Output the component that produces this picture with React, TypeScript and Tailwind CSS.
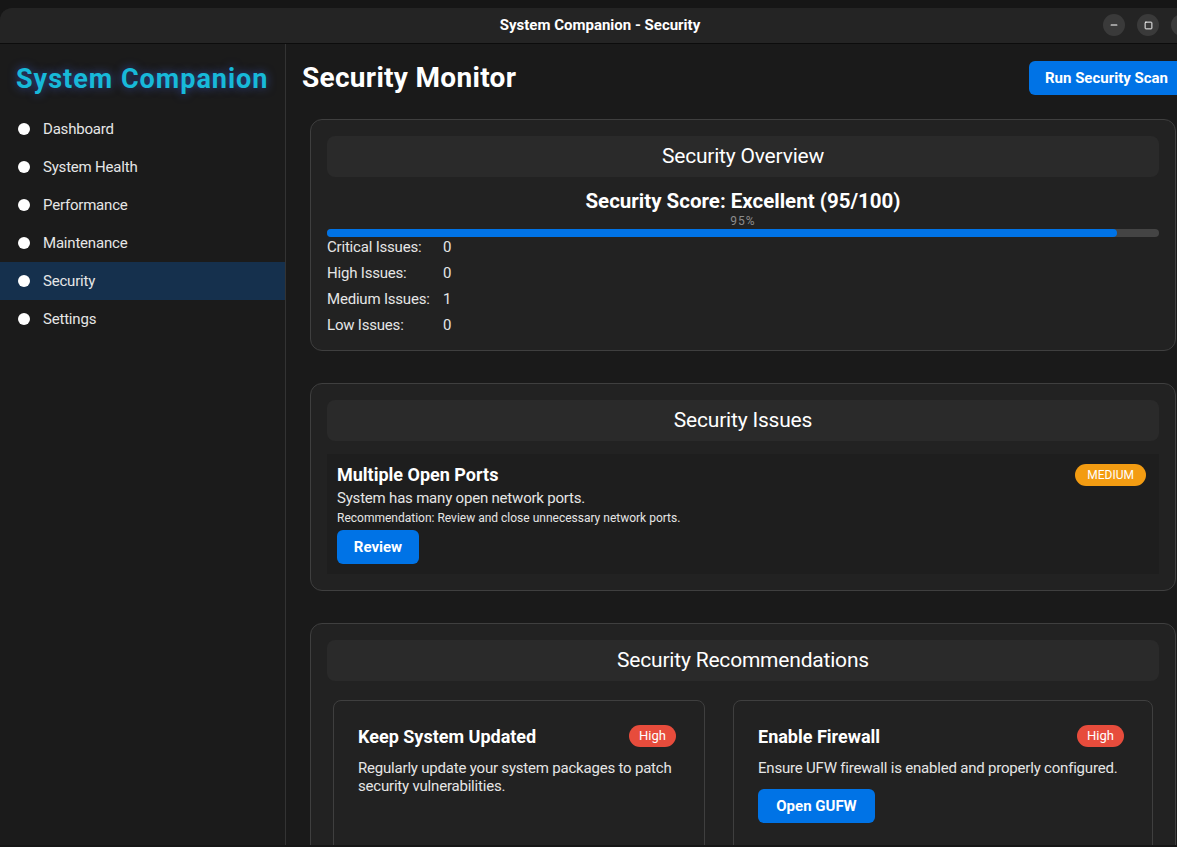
import { Minus, Square, X } from 'lucide-react'

const navItems = ['Dashboard', 'System Health', 'Performance', 'Maintenance', 'Security', 'Settings']

const stats = [
  { label: 'Critical Issues:', value: 0 },
  { label: 'High Issues:', value: 0 },
  { label: 'Medium Issues:', value: 1 },
  { label: 'Low Issues:', value: 0 },
]

function SectionHeader({ title }: { title: string }) {
  return (
    <div className="h-[41px] rounded-lg bg-[#2a2a2a] flex items-center justify-center text-[21px] text-white">
      {title}
    </div>
  )
}

export default function App() {
  const score = 95

  return (
    <div
      className="w-[1177px] h-[847px] overflow-hidden bg-[#161616] pt-2"
      style={{ fontFamily: 'Roboto, "Noto Sans", sans-serif' }}
    >
      <div className="w-[1200px] h-[837px] flex flex-col rounded-tl-xl overflow-hidden bg-[#1a1a1a]">
        {/* Title bar */}
        <div className="relative h-9 shrink-0 bg-[#242424] border-b border-[#0c0c0c] flex items-center justify-center">
          <span className="text-[15px] font-bold text-white">System Companion - Security</span>
          <div className="absolute right-[7px] top-[6px] flex gap-3">
            <div className="w-[22px] h-[22px] rounded-full bg-[#3a3a3a] flex items-end justify-center pb-[6px]">
              <Minus className="w-[10px] h-[10px] text-white" strokeWidth={2.5} />
            </div>
            <div className="w-[22px] h-[22px] rounded-full bg-[#3a3a3a] flex items-center justify-center">
              <Square className="w-[9px] h-[9px] text-white" strokeWidth={2.5} />
            </div>
            <div className="w-[22px] h-[22px] rounded-full bg-[#3a3a3a] flex items-center justify-center">
              <X className="w-3 h-3 text-white" strokeWidth={2} />
            </div>
          </div>
        </div>

        <div className="flex flex-1 min-h-0 tracking-[-0.2px]">
          {/* Sidebar */}
          <aside className="w-[286px] shrink-0 bg-[#1b1b1b] border-r border-[#333]">
            <div
              className="pt-[15px] pl-4 h-[66px] text-[27px] font-bold tracking-[1px] text-[#17b9d9]"
              style={{ textShadow: '0 0 10px rgba(70, 110, 255, 0.55)' }}
            >
              System Companion
            </div>
            <nav className="flex flex-col">
              {navItems.map((item) => (
                <div
                  key={item}
                  className={`h-[38px] flex items-center pl-[18px] gap-[13px] text-[15px] text-[#e6e6e6] ${
                    item === 'Security' ? 'bg-[#15304d]' : ''
                  }`}
                >
                  <span className="w-3 h-3 rounded-full bg-white" />
                  {item}
                </div>
              ))}
            </nav>
          </aside>

          {/* Main */}
          <main className="flex-1 px-4 pt-[17px] overflow-hidden">
            <div className="flex items-center justify-between h-[34px]">
              <h1 className="text-[28px] font-bold tracking-[0.3px] text-white">Security Monitor</h1>
              <button className="h-[34px] w-[155px] rounded-md bg-[#0073e6] text-white text-[15px] font-bold tracking-normal">
                Run Security Scan
              </button>
            </div>

            {/* Overview */}
            <section className="mt-6 mx-2 rounded-xl border border-[#3f3f3f] bg-[#222] p-4 pb-3">
              <SectionHeader title="Security Overview" />
              <div className="mt-3 text-center text-[20.5px] font-bold text-white leading-6 tracking-normal">
                Security Score: Excellent (95/100)
              </div>
              <div className="text-center text-[12px] text-[#8c8c8c] leading-4 tracking-[1px]">{score}%</div>
              <div className="h-2 rounded-full bg-[#444]">
                <div className="h-2 rounded-full bg-[#0073e6]" style={{ width: `${score}%` }} />
              </div>
              <div className="-mt-[3px] flex flex-col">
                {stats.map((s) => (
                  <div key={s.label} className="h-[26px] flex items-center text-[15px] text-[#e6e6e6]">
                    <span className="w-[116px]">{s.label}</span>
                    <span>{s.value}</span>
                  </div>
                ))}
              </div>
            </section>

            {/* Issues */}
            <section className="mt-8 mx-2 rounded-xl border border-[#3f3f3f] bg-[#222] p-4">
              <SectionHeader title="Security Issues" />
              <div className="mt-[13px] bg-[#1e1e1e] p-[10px] pr-[13px]">
                <div className="flex items-start justify-between">
                  <div className="text-[18px] font-bold text-white leading-[22px] tracking-normal">Multiple Open Ports</div>
                  <span className="h-[22px] px-3 rounded-full bg-[#f39c12] text-white text-[12px] tracking-normal flex items-center">
                    MEDIUM
                  </span>
                </div>
                <div className="mt-[2px] text-[15px] text-[#e6e6e6] leading-5">System has many open network ports.</div>
                <div className="text-[12px] text-[#e6e6e6] leading-5 tracking-normal">
                  Recommendation: Review and close unnecessary network ports.
                </div>
                <button className="mt-[2px] h-[34px] w-[82px] rounded-md bg-[#0073e6] text-white text-[15px] font-bold tracking-normal">
                  Review
                </button>
              </div>
            </section>

            {/* Recommendations */}
            <section className="mt-8 mx-2 rounded-xl border border-[#3f3f3f] bg-[#222] p-4">
              <SectionHeader title="Security Recommendations" />
              <div className="mt-[19px] ml-[6px] flex gap-[28px]">
                <div className="w-[372px] h-[160px] rounded-lg border border-[#3f3f3f] pl-6 pr-7 pt-6">
                  <div className="flex items-center justify-between h-[22px]">
                    <span className="text-[18px] font-bold text-white tracking-normal">Keep System Updated</span>
                    <span className="h-[22px] px-[10px] rounded-full bg-[#e74c3c] text-white text-[13px] tracking-normal flex items-center">
                      High
                    </span>
                  </div>
                  <p className="mt-3 text-[15px] leading-[18px] text-[#e6e6e6]">
                    Regularly update your system packages to patch security vulnerabilities.
                  </p>
                </div>
                <div className="w-[420px] h-[160px] rounded-lg border border-[#3f3f3f] pl-6 pr-7 pt-6">
                  <div className="flex items-center justify-between h-[22px]">
                    <span className="text-[18px] font-bold text-white tracking-normal">Enable Firewall</span>
                    <span className="h-[22px] px-[10px] rounded-full bg-[#e74c3c] text-white text-[13px] tracking-normal flex items-center">
                      High
                    </span>
                  </div>
                  <p className="mt-3 text-[15px] leading-[18px] text-[#e6e6e6] whitespace-nowrap">
                    Ensure UFW firewall is enabled and properly configured.
                  </p>
                  <button className="mt-3 h-[34px] w-[117px] rounded-md bg-[#0073e6] text-white text-[15px] font-bold tracking-normal">
                    Open GUFW
                  </button>
                </div>
              </div>
            </section>
          </main>
        </div>
      </div>
    </div>
  )
}
